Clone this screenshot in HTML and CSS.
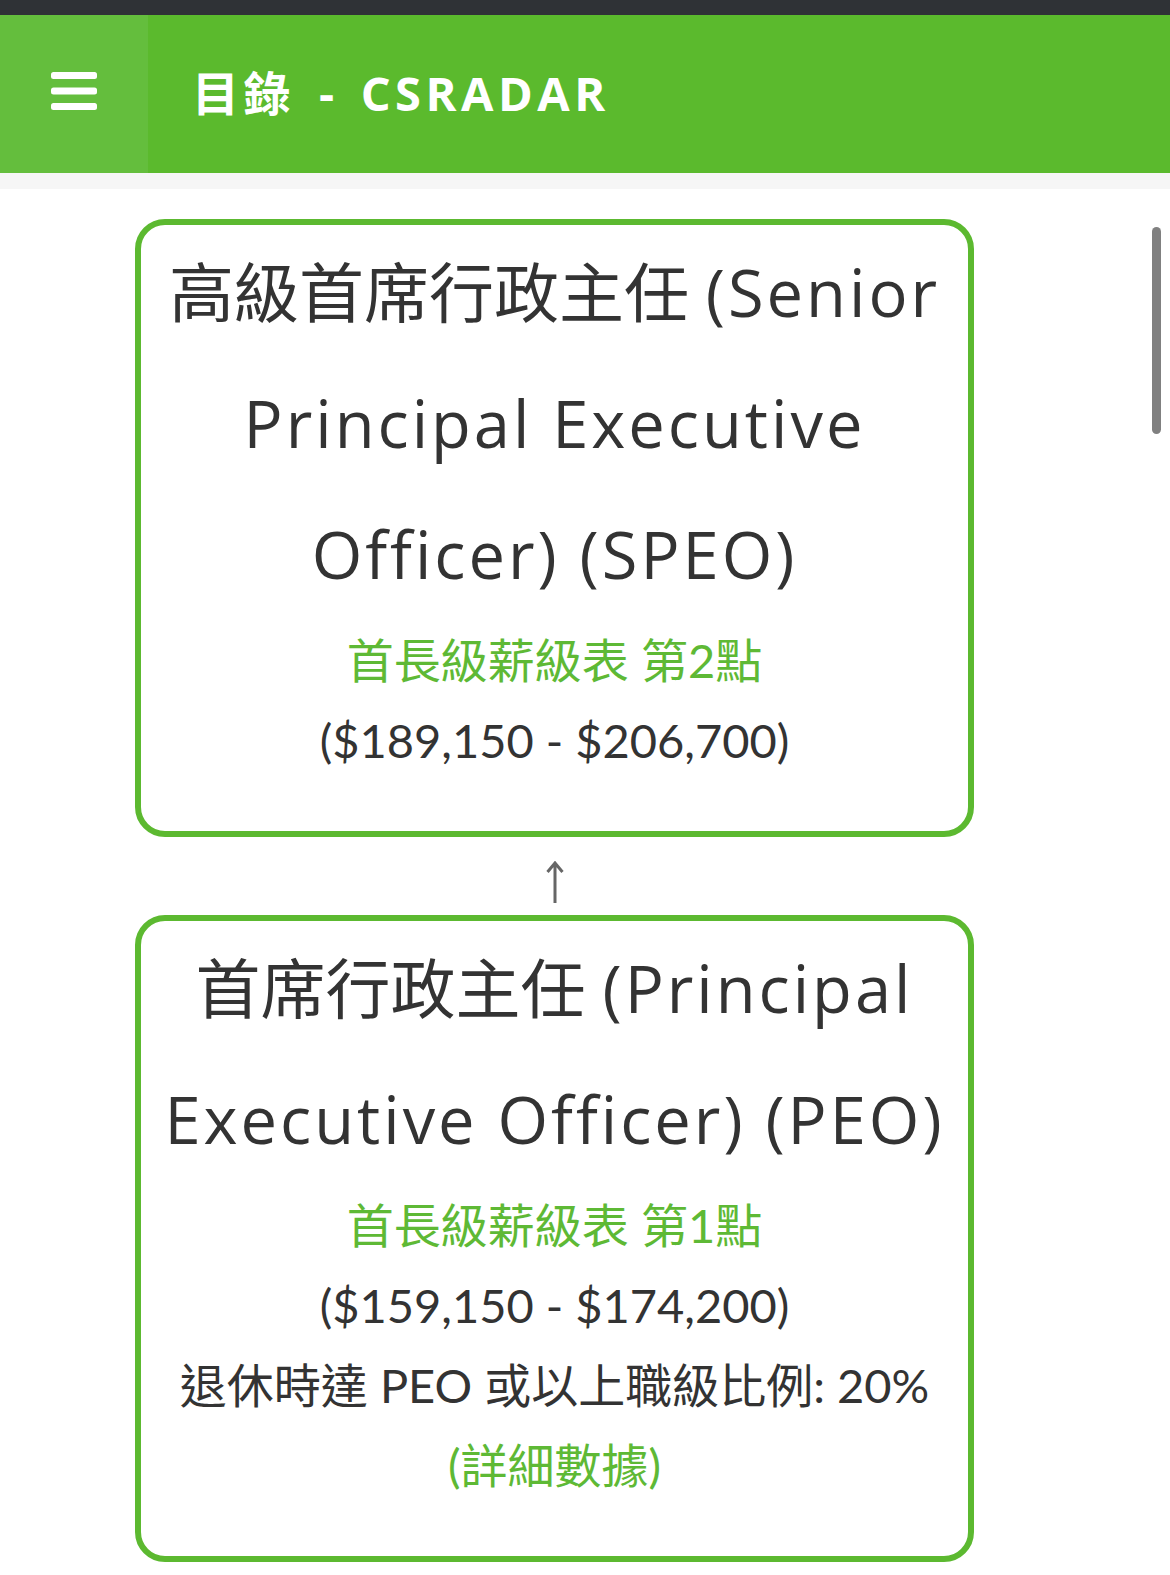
FILE: index.html
```html
<!DOCTYPE html>
<html lang="zh-HK">
<head>
    <meta charset="UTF-8">
    <meta name="viewport" content="width=device-width, initial-scale=1.0">
    <title>目錄 - CSRADAR</title>
    <link rel="stylesheet" href="styles.css">
</head>
<body>
    <div class="status-bar"></div>

    <header class="top-bar">
        <button class="menu-btn" aria-label="menu">
            <svg viewBox="0 0 46 38" width="46" height="38">
                <rect x="0" y="0" width="46" height="7" rx="2.5"/>
                <rect x="0" y="15.5" width="46" height="7" rx="2.5"/>
                <rect x="0" y="31" width="46" height="7" rx="2.5"/>
            </svg>
        </button>
        <h1 class="page-title">目錄<span class="title-sep">-</span>CSRADAR</h1>
    </header>
    <div class="top-shadow"></div>

    <main class="ladder">
        <div class="rank-card">
            <div class="rank-name">高級首席行政主任 <span class="en">(Senior Principal Executive Officer) (SPEO)</span></div>
            <div class="rank-scale">首長級薪級表 第2點</div>
            <div class="rank-salary">($189,150 - $206,700)</div>
        </div>

        <div class="ladder-arrow">
            <svg viewBox="0 0 20 42" width="20" height="42">
                <path d="M10 2 V42 M2.5 11 L10 2 L17.5 11"/>
            </svg>
        </div>

        <div class="rank-card">
            <div class="rank-name">首席行政主任 <span class="en">(Principal Executive Officer) (PEO)</span></div>
            <div class="rank-scale">首長級薪級表 第1點</div>
            <div class="rank-salary">($159,150 - $174,200)</div>
            <div class="rank-salary">退休時達 PEO 或以上職級比例: 20%</div>
            <a href="#" class="rank-link">(詳細數據)</a>
        </div>
    </main>

    <div class="scroll-thumb"></div>
</body>
</html>
```

FILE: styles.css
```css
* {
    margin: 0;
    padding: 0;
    box-sizing: border-box;
}

body {
    font-family: Lato, 'Noto Sans CJK TC', sans-serif;
    background: #fff;
    color: #333;
}

.status-bar {
    height: 15px;
    background: #2f3236;
}

.top-bar {
    display: flex;
    align-items: center;
    height: 158px;
    background: #5bba2d;
    color: #fff;
}

.menu-btn {
    display: flex;
    align-items: center;
    justify-content: center;
    width: 148px;
    height: 100%;
    padding-bottom: 6px;
    border: none;
    background: #64be3d;
}

.menu-btn svg {
    fill: #fff;
}

.page-title {
    padding-left: 44px;
    padding-bottom: 7px;
    font-family: 'Open Sans', 'Noto Sans CJK TC', sans-serif;
    font-size: 47px;
    font-weight: 700;
    letter-spacing: 4.5px;
}

.title-sep {
    margin: 0 22px 0 24px;
}

.top-shadow {
    height: 16px;
    background: #f6f6f6;
}

.ladder {
    padding-top: 30px;
}

.rank-card {
    width: 839px;
    margin-left: 135px;
    padding: 2px 10px 51px;
    border: 6px solid #5cb930;
    border-radius: 30px;
    text-align: center;
}

.rank-name {
    font-family: 'Open Sans', 'Noto Sans CJK TC', sans-serif;
    font-size: 65px;
    line-height: 131px;
    color: #333;
}

.rank-name .en {
    letter-spacing: 3px;
}

.rank-scale,
.rank-link {
    font-size: 47px;
    line-height: 80px;
    color: #5eb935;
}

.rank-salary {
    font-size: 47px;
    line-height: 80px;
    color: #333;
}

.rank-link {
    display: block;
    text-decoration: none;
}

.ladder-arrow {
    height: 78px;
    width: 839px;
    margin-left: 135px;
    padding-top: 24px;
    text-align: center;
}

.ladder-arrow svg {
    fill: none;
    stroke: #666;
    stroke-width: 3;
}

.scroll-thumb {
    position: fixed;
    top: 227px;
    right: 9px;
    width: 9px;
    height: 207px;
    border-radius: 5px;
    background: #808080;
}
```
